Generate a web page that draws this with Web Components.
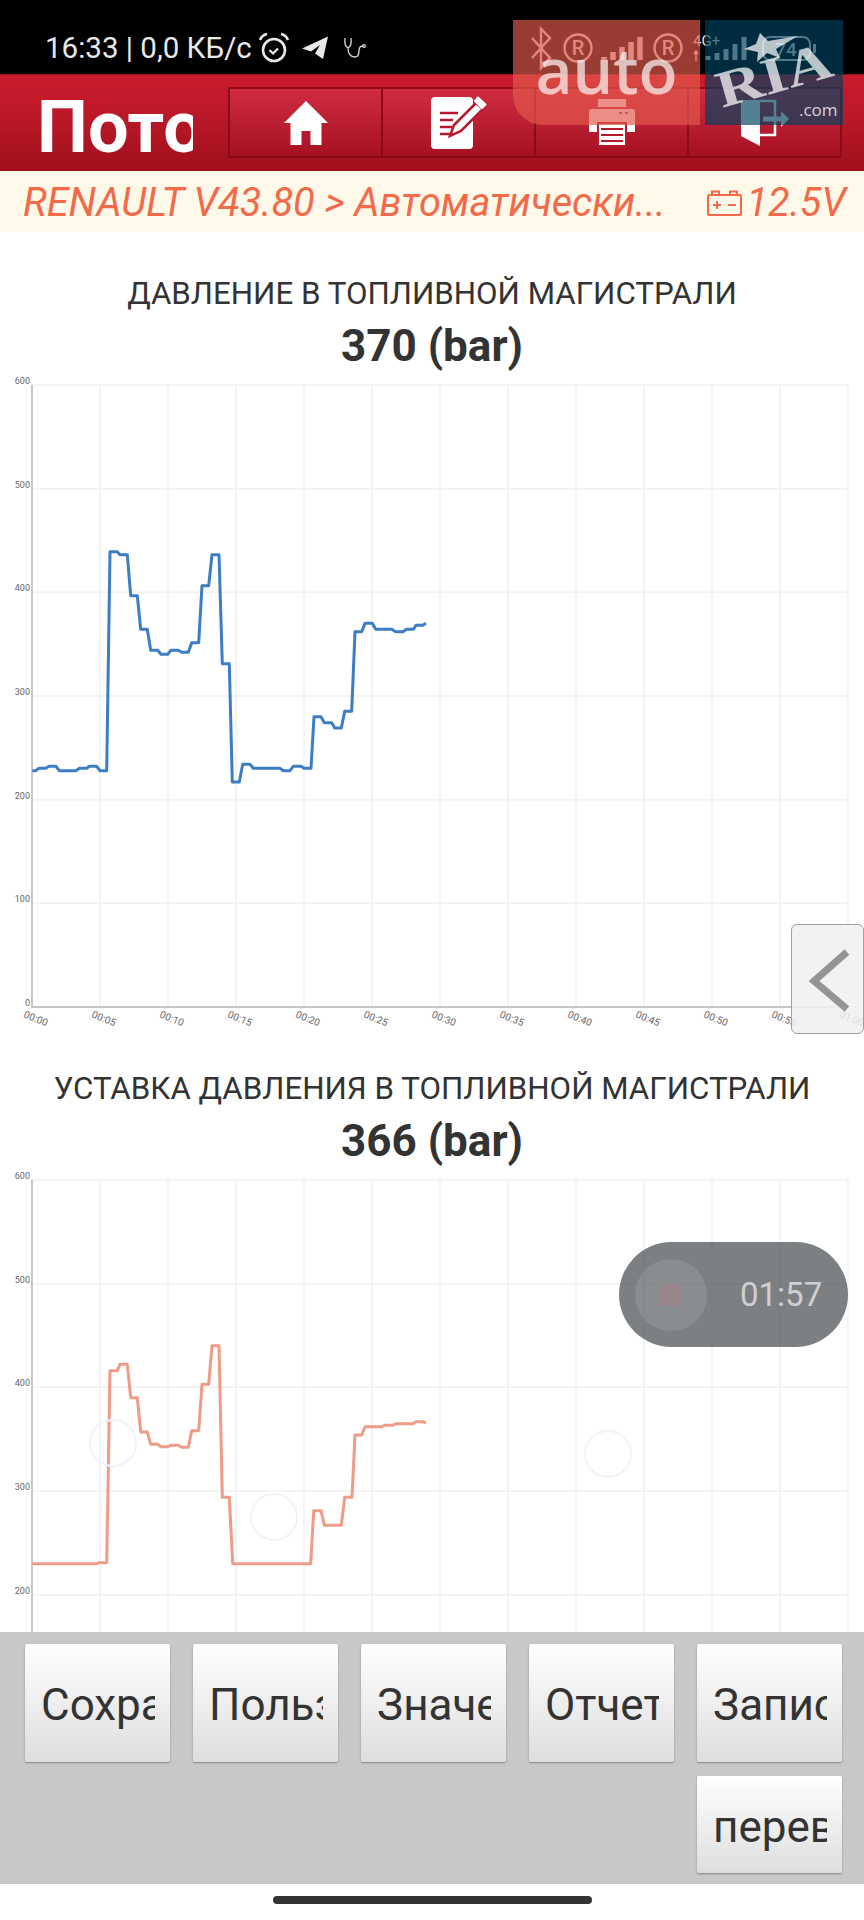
<!DOCTYPE html>
<html lang="ru"><head><meta charset="utf-8"><title>Поток</title>
<style>html,body{margin:0;padding:0;background:#fff}body{font-family:Roboto,"Liberation Sans",sans-serif}</style>
</head><body>
<x-app>
  <x-status-bar slot="status"></x-status-bar>
  <x-app-header slot="header" title-text="Поток данных">
    <x-nav-btn><svg width="46" height="46" viewBox="0 0 46 46"><path fill="#fff" d="M23 1 L45 23 L38.500 23 L38.500 45 L27.500 45 L27.500 31 L18.500 31 L18.500 45 L7.500 45 L7.500 23 L1 23 Z"/></svg></x-nav-btn>
    <x-nav-btn><svg width="56" height="54" viewBox="0 0 56 54"><rect x="0" y="1" width="42" height="52" rx="4" fill="#fff"/><path d="M9 17H27M9 24H22M9 31H21M9 38H20" stroke="#b51a2c" stroke-width="2.500"/><path d="M19 40 L23 29 L45 7 L52 13 L30 35 Z" fill="#fff" stroke="#b51a2c" stroke-width="2.500"/><path d="M47 1.500 L54.500 8.500 L51 12 L44 5 Z" fill="#fff" stroke="#fff" stroke-linejoin="round" stroke-width="2"/></svg></x-nav-btn>
    <x-nav-btn><svg width="46" height="48" viewBox="0 0 46 48"><rect x="9" y="0" width="28" height="8" fill="#fff"/><path d="M3 10H43a3 3 0 0 1 3 3V33H0V13a3 3 0 0 1 3-3Z" fill="#fff"/><rect x="30" y="13" width="3" height="2" fill="#c9505a"/><rect x="36" y="13" width="3" height="2" fill="#c9505a"/><rect x="9" y="24" width="28" height="23" fill="#fff" stroke="#b51a2c" stroke-width="2"/><path d="M12 30H34M12 36H34M12 42H34" stroke="#b51a2c" stroke-width="2"/></svg></x-nav-btn>
    <x-nav-btn><svg width="52" height="48" viewBox="0 0 52 48"><path fill="#fff" d="M2 1 L21 1 L21 47 L2 37 Z"/><path d="M21 2H36V36H21" fill="none" stroke="#fff" stroke-width="2.500"/><path d="M24 17.500H42V12L50 20L42 28V22.500H24Z" fill="#fff"/></svg></x-nav-btn>
  </x-app-header>
  <x-breadcrumb slot="crumb" path="RENAULT V43.80 &gt; Автоматически..." volt="12.5V"></x-breadcrumb>

  <x-gauge-chart label="ДАВЛЕНИЕ В ТОПЛИВНОЙ МАГИСТРАЛИ" value="370 (bar)" series="pressure" color="#3c7dc4"></x-gauge-chart>
  <x-gauge-chart label="УСТАВКА ДАВЛЕНИЯ В ТОПЛИВНОЙ МАГИСТРАЛИ" value="366 (bar)" series="setpoint" color="#ee9c87"></x-gauge-chart>

  <x-action-panel slot="actions">
    <x-action-btn>Сохранить</x-action-btn>
    <x-action-btn>Пользователь</x-action-btn>
    <x-action-btn>Значение</x-action-btn>
    <x-action-btn>Отчет</x-action-btn>
    <x-action-btn>Запись</x-action-btn>
    <x-action-btn class="second">перевод</x-action-btn>
  </x-action-panel>
  <x-home-bar slot="home"></x-home-bar>

  <x-watermark slot="overlay"></x-watermark>
  <x-side-tab slot="overlay"></x-side-tab>
  <x-record-pill slot="overlay" time="01:57"></x-record-pill>
  <x-ghost-dot slot="overlay" style="left:89px;top:1419px"></x-ghost-dot>
  <x-ghost-dot slot="overlay" style="left:250px;top:1493px"></x-ghost-dot>
  <x-ghost-dot slot="overlay" style="left:584px;top:1430px"></x-ghost-dot>
</x-app>
<script>
function el(name, css, html, init){
  customElements.define(name, class extends HTMLElement{
    connectedCallback(){
      if(this.shadowRoot) return;
      const r=this.attachShadow({mode:'open'});
      r.innerHTML='<style>'+css+'</style>'+(typeof html==='function'?html(this):html);
      if(init) init(this,r);
    }
  });
}
const F='Roboto,"Liberation Sans",sans-serif';

el('x-app',`
:host{display:block;position:relative;width:864px;height:1920px;overflow:hidden;font-family:${F}}
.col{display:flex;flex-direction:column;height:100%}
main{flex:1;min-height:0;overflow:hidden;background:#fff}
`,`<div class="col"><slot name="status"></slot><slot name="header"></slot><slot name="crumb"></slot><main><slot></slot></main><slot name="actions"></slot><slot name="home"></slot></div><slot name="overlay"></slot>`);

el('x-status-bar',`
:host{display:flex;align-items:center;height:74px;background:#000;color:#e9e9e9;box-sizing:border-box;padding:22px 29px 0 45px;font:400 29.500px/1 ${F}}
.t{white-space:nowrap;position:relative;top:1px}
svg{display:block;flex:none}
.a{margin-left:6px}.b{margin-left:11px}.c{margin-left:14px}
.r{margin-left:auto}
`,`<span class="t">16:33 | 0,0 КБ/с</span>
<svg class="a" width="32" height="32" viewBox="0 0 32 32" fill="none" stroke="#e9e9e9"><circle cx="16" cy="18" r="11" stroke-width="2.600"/><path d="M11.500 18l3.500 3.500 5-5" stroke-width="2.200"/><path d="M2 8Q4 3 9 2M30 8Q28 3 23 2" stroke-width="2.600"/></svg>
<svg class="b" width="28" height="26" viewBox="0 0 28 26"><path fill="#e9e9e9" d="M1 13.500 L27 1.500 L22 24 L14 18.500 L19 10 L10 16.500 Z"/></svg>
<svg class="c" width="23" height="22" viewBox="0 0 23 22" fill="none" stroke="#d8d8d8" stroke-width="1.300"><path d="M2 1Q1 9 5 11Q9 9 8 1M5 11Q5 20 12 20Q16 20 16 14Q16 9 20 9"/><circle cx="21" cy="9" r="1.300"/></svg>
<svg class="r" width="310" height="48" viewBox="525 24 310 48" fill="none" stroke="#e9e9e9">
 <path d="M532 38L550 58L541 68V29L550 38L532 58" stroke-width="2.400"/>
 <circle cx="578" cy="48" r="13.500" stroke-width="2.400"/><text x="578" y="55" text-anchor="middle" font-size="20" font-weight="500" fill="#e9e9e9" stroke="none" font-family='${F}'>R</text>
 <path d="M604 60V57M613 60V52M622 60V47M631 60V42M640 60V37" stroke-width="5.500"/>
 <circle cx="668" cy="48" r="13.500" stroke-width="2.400"/><text x="668" y="55" text-anchor="middle" font-size="20" font-weight="500" fill="#e9e9e9" stroke="none" font-family='${F}'>R</text>
 <text x="693" y="46" font-size="15" fill="#e9e9e9" stroke="none" font-family='${F}'>4G+</text>
 <path d="M708 60V56M717 60V53M726 60V49M735 60V44M744 60V37" stroke-width="5"/>
 <path d="M696 61V52M694 54l2-3 2 3" stroke-width="1.500"/>
 <rect x="763" y="37" width="47" height="23" rx="7" stroke-width="2"/><text x="786" y="56" text-anchor="middle" font-size="19" font-weight="500" fill="#e9e9e9" stroke="none" font-family='${F}'>74</text>
 <rect x="813" y="44" width="3" height="9" fill="#e9e9e9" stroke="none"/>
</svg>`);

el('x-app-header',`
:host{display:flex;align-items:center;height:97px;box-sizing:border-box;padding-left:37px;background:linear-gradient(#cb1a2c 0,#c01a2b 30%,#a0101c 100%);border-top:1px solid #8c0f1a}
.title{width:156px;flex:none;overflow:hidden;white-space:nowrap;font:700 72px/97px ${F};color:#fff;padding-top:4px;margin-top:-1px;height:91px}
.grp{margin-left:35px;width:614px;height:71px;display:flex;flex:none;box-sizing:border-box;border:2px solid #8c0b16;margin-top:-1px}
`,h=>`<div class="title">${h.getAttribute('title-text')}</div><div class="grp"><slot></slot></div>`);

el('x-nav-btn',`
:host{flex:1;display:flex;align-items:center;justify-content:center;background:linear-gradient(#d02c42,#a51122);border-left:2px solid #8c0b16}
:host(:first-child){border-left:0}
`,`<slot></slot>`);

el('x-breadcrumb',`
:host{display:flex;align-items:center;height:61px;box-sizing:border-box;padding:2px 18px 0 23px;background:#fff9e9;color:#f26a4a;font:italic 400 39.700px/59px ${F};white-space:nowrap}
.p{flex:1;overflow:hidden}
svg{flex:none;margin-right:4px;display:block}
`,h=>`<span class="p">${h.getAttribute('path').replace('>','&gt;')}</span><svg width="35" height="26" viewBox="0 0 35 26" fill="none" stroke="#f26a4a" stroke-width="2"><rect x="1" y="5" width="33" height="20" rx="1.500"/><path d="M5 4V1.500H12V4M23 4V1.500H30V4M6 15H14M10 11V19M21 15H29"/></svg><span>${h.getAttribute('volt')}</span>`);

const z=(base,a)=>a.map(p=>[p[0]/3,base+p[1]/3]);
const SERIES={
 pressure:[...z(670,[[97,302],[107,302],[117,295],[137,295],[147,289],[168,289],[178,302],[228,302],[238,295],[260,295],[268,289],[290,289],[300,302],[320,302]]),
  ...z(370,[[330,545],[352,545],[360,554],[382,554],[392,677],[412,677],[422,778],[442,778],[452,841],[473,841],[483,853],[503,853],[513,841],[535,841],[545,847],[565,847],[575,818],[596,818],[606,647],[626,647],[636,554],[657,554],[667,881],[688,881]]),
  ...z(670,[[697,336],[718,336],[728,283],[750,283],[760,295],[840,295],[850,302],[870,302],[880,289],[903,289],[912,295],[933,295],[942,140],[963,140],[973,158],[995,158],[1004,174],[1024,174],[1034,124],[1055,124]]),
  ...z(370,[[1065,785],[1085,785],[1095,760],[1117,760],[1127,778],[1175,778],[1187,785],[1210,785],[1218,778],[1240,778],[1248,766],[1268,766],[1278,760]])].map(p=>[p[0],p[1]-385]),
 setpoint:[...z(1440,[[97,371],[290,371],[298,368],[320,368]]),
  ...z(1160,[[330,632],[352,632],[360,613],[382,613],[392,713],[412,713],[422,816],[442,816],[452,853],[473,853],[483,860],[503,860],[513,856],[535,856],[545,862],[565,862],[575,812],[596,812],[606,673],[626,673],[636,557],[657,557]]),
  ...z(1440,[[667,172],[688,172],[698,371],[932,371],[941,212],[963,212],[973,256],[1024,256],[1034,172],[1056,172]]),
  ...z(1160,[[1065,825],[1085,825],[1095,800],[1145,800],[1155,796],[1178,796],[1187,791],[1238,791],[1248,785],[1268,785],[1278,788]])].map(p=>[p[0],p[1]-1180])
};
el('x-gauge-chart',`
:host{display:block;height:795px;text-align:center;color:#333;overflow:hidden}
.l{font:400 31.300px/36px ${F};padding-top:44px;white-space:nowrap}
.v{font:700 44px/48px ${F};margin-top:10px;margin-bottom:-1px}
svg{display:block}
text{font:400 9px ${F};fill:#666}
text.x{font-size:10px}
`,h=>{
  const T=16,S=103.67,L=32,D=68,B=T+S*6;
  let g='';
  for(let i=1;i<=12;i++) g+=`<line x1="${L+D*i}" x2="${L+D*i}" y1="${T}" y2="${B}" stroke="#f0f0f0" stroke-width="1.500"/>`;
  for(let i=0;i<6;i++) g+=`<line x1="${L}" x2="848" y1="${T+S*i}" y2="${T+S*i}" stroke="#f0f0f0" stroke-width="1.500"/>`;
  g+=`<line x1="${L}" x2="${L}" y1="${T}" y2="${B+1}" stroke="#c6c6c6" stroke-width="2"/><line x1="${L}" x2="848" y1="${B}" y2="${B}" stroke="#c6c6c6" stroke-width="2"/>`;
  for(let i=0;i<=6;i++) g+=`<text x="30" y="${T+S*i-1}" text-anchor="end">${600-100*i}</text>`;
  for(let i=0;i<=12;i++){const s=5*i,lab=(s===60?'01:00':'00:'+String(s).padStart(2,'0'));
    g+=`<text class="x" transform="translate(${L+D*i-9} ${B+10}) rotate(22)">${lab}</text>`;}
  const pts=SERIES[h.getAttribute('series')].map(p=>p[0].toFixed(1)+','+(p[1]+T).toFixed(1)).join(' ');
  return `<div class="l">${h.getAttribute('label')}</div><div class="v">${h.getAttribute('value')}</div>
  <svg width="864" height="658" viewBox="0 0 864 658">${g}<polyline points="${pts}" fill="none" stroke="${h.getAttribute('color')}" stroke-width="3" stroke-linejoin="round"/></svg>`;
});

el('x-action-panel',`
:host{display:grid;grid-template-columns:repeat(5,145px);grid-auto-rows:min-content;column-gap:23px;row-gap:14px;height:252px;box-sizing:border-box;padding:12px 22px 0 25px;background:#c8c8c8}
::slotted(.second){grid-column:5;height:97px}
`,`<slot></slot>`);

el('x-action-btn',`
:host{display:flex;align-items:center;height:118px;box-sizing:border-box;padding:4px 15px 0 16px;border-radius:2px;background:linear-gradient(#fff,#dedede);box-shadow:0 1px 2px rgba(0,0,0,.35);color:#333;font:400 44px/1 ${F};overflow:hidden}
.c{display:block;overflow:hidden;white-space:nowrap;width:100%;line-height:60px}
`,`<span class="c"><slot></slot></span>`);

el('x-home-bar',`
:host{display:flex;align-items:center;justify-content:center;height:36px;background:#fff;padding-bottom:4px;box-sizing:border-box}
i{display:block;width:319px;height:8px;border-radius:4px;background:#333}
`,`<i></i>`);

el('x-watermark',`
:host{position:absolute;left:513px;top:20px;display:flex;gap:5px;height:105px;z-index:5}
.a{width:187px;height:105px;border-bottom-left-radius:30px;background:rgba(225,88,75,.68);color:rgba(255,255,255,.68);font:600 64px/1 "Open Sans",sans-serif;text-align:center;box-sizing:border-box;padding-top:18px}
svg{display:block}
`,`<div class="a">auto</div>
<svg width="138" height="105" viewBox="705 20 138 105"><rect x="705" y="20" width="138" height="105" fill="rgba(0,66,94,.67)"/>
<polygon fill="rgba(255,255,255,.72)" points="760,33 768,41 798,36 776,49 780,58 767,53 757,62 758,52 744,49 756,44"/>
<text transform="translate(722 108) rotate(-16)" font-family='"Liberation Serif",serif' font-weight="700" font-size="52" textLength="118" lengthAdjust="spacingAndGlyphs" fill="rgba(255,255,255,.72)">RIA</text>
<text x="799" y="116" font-family='"Open Sans",sans-serif' font-size="17" fill="rgba(255,255,255,.78)">.com</text></svg>`);

el('x-side-tab',`
:host{position:absolute;left:791px;top:924px;width:73px;height:110px;box-sizing:border-box;border:1.500px solid #a0a0a0;border-radius:6px;background:rgba(240,240,240,.85);z-index:4}
svg{display:block;position:absolute;left:0;top:0}
`,`<svg width="73" height="110" viewBox="791 924 73 110"><path d="M846 951 L813 980 L846 1008" fill="none" stroke="#949494" stroke-width="7"/></svg>`);

el('x-record-pill',`
:host{position:absolute;left:619px;top:1242px;width:229px;height:105px;border-radius:53px;background:rgba(80,85,90,.75);display:flex;align-items:center;box-sizing:border-box;padding-left:16px;z-index:4;color:#d0d0d0;font:400 33px/1 ${F}}
.c{width:72px;height:72px;border-radius:50%;background:rgba(255,255,255,.1);display:flex;align-items:center;justify-content:center;flex:none}
.s{width:22px;height:22px;border-radius:3px;background:#968689}
.t{margin-left:33px}
`,h=>`<div class="c"><div class="s"></div></div><span class="t">${h.getAttribute('time')}</span>`);

el('x-ghost-dot',`
:host{position:absolute;width:48px;height:48px;border:2px solid #f3f3fa;border-radius:50%;box-sizing:border-box;z-index:3}
`,``);
</script>
</body></html>
